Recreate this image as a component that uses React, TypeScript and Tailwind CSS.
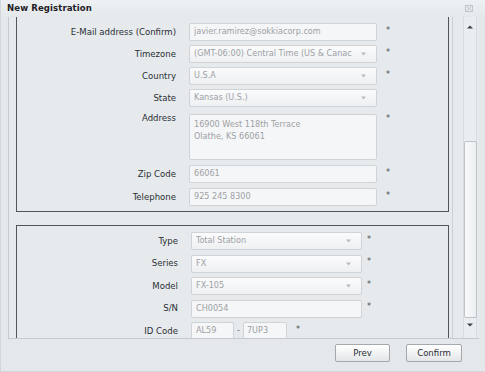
import React from "react";

const font = { fontFamily: '"DejaVu Sans Condensed", "DejaVu Sans", sans-serif' };

function Arrow() {
  return (
    <svg width="7" height="4" viewBox="0 0 7 4" className="shrink-0 ml-[4px]">
      <path d="M1 0.5 L6 0.5 L3.5 3.5 Z" fill="#b8bcc0" />
    </svg>
  );
}

function Field({
  label,
  value,
  combo,
  required,
  width,
  gap,
}: {
  label: string;
  value: string;
  combo?: boolean;
  required?: boolean;
  width: string;
  gap: string;
}) {
  return (
    <div className="flex items-center h-[18px]">
      <div className="w-[159px] text-right text-[9.5px] text-[#2a2e33]">{label}</div>
      <div
        className={`ml-[13px] ${width} h-[18px] flex items-center pl-[4px] pr-[9px] rounded-[2px] border border-[#cfd4d8] ${
          combo ? "bg-gradient-to-b from-[#fbfbfc] to-[#eef0f2]" : "bg-[#f5f6f7]"
        }`}
      >
        <span className="flex-1 min-w-0 text-[9px] text-[#9da1a5] whitespace-nowrap overflow-hidden">{value}</span>
        {combo && <Arrow />}
      </div>
      {required && <span className={`${gap} text-[9px] text-[#4a4f55] -mt-[3px]`}>*</span>}
    </div>
  );
}

export default function App() {
  return (
    <div
      className="w-[485px] h-[372px] bg-[#e4e8eb] flex flex-col overflow-hidden border-l border-b border-[#d2d6da]"
      style={font}
    >
      {/* title bar */}
      <div className="h-[16px] flex items-center justify-between pl-[6px] pr-[12px] bg-gradient-to-b from-[#eef1f3] to-[#e6e9ec]">
        <span className="text-[9.5px] font-bold text-[#1e2226] tracking-[0.1px]">New Registration</span>
        <svg width="8" height="7" viewBox="0 0 8 7">
          <rect x="0.5" y="0.5" width="7" height="6" fill="none" stroke="#c2c6ca" />
          <path d="M1.5 1.5 L6.5 5.5 M6.5 1.5 L1.5 5.5" stroke="#c2c6ca" />
        </svg>
      </div>

      {/* scroll viewer */}
      <div className="ml-[7px] mt-[1px] w-[471px] h-[322px] flex border-l border-b border-[#c6cacf] bg-[#e6eaed]">
        <div className="flex-1 overflow-hidden pl-[7px] pr-[3px]">
          <div className="-mt-[20px] flex flex-col">
            {/* panel 1 */}
            <div className="border-[1.5px] border-[#4f555b] pt-[25px] pb-[5px] flex flex-col gap-[4px]">
              <Field label="E-Mail address (Confirm)" value="javier.ramirez@sokkiacorp.com" required width="w-[188px]" gap="ml-[9px]" />
              <Field label="Timezone" value="(GMT-06:00) Central Time (US & Canac" combo required width="w-[188px]" gap="ml-[9px]" />
              <Field label="Country" value="U.S.A" combo required width="w-[188px]" gap="ml-[9px]" />
              <Field label="State" value="Kansas (U.S.)" combo width="w-[188px]" gap="ml-[9px]" />
              <div className="flex items-start mt-[3px]">
                <div className="w-[159px] text-right text-[9.5px] text-[#2a2e33] -mt-[3px]">Address</div>
                <div className="ml-[13px] w-[188px] h-[46px] rounded-[2px] border border-[#cfd4d8] bg-[#f5f6f7] px-[4px] pt-[3px] text-[9px] leading-[12px] text-[#9da1a5]">
                  <div>16900 West 118th Terrace</div>
                  <div>Olathe, KS 66061</div>
                </div>
                <span className="ml-[9px] text-[9px] text-[#4a4f55] -mt-[2px]">*</span>
              </div>
              <div className="mt-[1px] flex flex-col gap-[5px]">
                <Field label="Zip Code" value="66061" required width="w-[188px]" gap="ml-[9px]" />
                <Field label="Telephone" value="925 245 8300" required width="w-[188px]" gap="ml-[9px]" />
              </div>
            </div>

            {/* panel 2 */}
            <div className="mt-[13px] border-[1.5px] border-[#4f555b] border-b-0 pt-[6px] pl-[2px] flex flex-col gap-[4.5px] h-[200px]">
              <Field label="Type" value="Total Station" combo required width="w-[171px]" gap="ml-[5px]" />
              <Field label="Series" value="FX" combo required width="w-[171px]" gap="ml-[5px]" />
              <Field label="Model" value="FX-105" combo required width="w-[171px]" gap="ml-[5px]" />
              <Field label="S/N" value="CH0054" required width="w-[171px]" gap="ml-[5px]" />
              <div className="flex items-center h-[18px]">
                <div className="w-[159px] text-right text-[9.5px] text-[#2a2e33]">ID Code</div>
                <div className="ml-[13px] w-[43px] h-[18px] flex items-center pl-[4px] rounded-[2px] border border-[#cfd4d8] bg-[#f5f6f7] text-[9px] text-[#9da1a5]">AL59</div>
                <span className="mx-[3px] text-[9px] text-[#6a6f74]">-</span>
                <div className="w-[44px] h-[18px] flex items-center pl-[3px] rounded-[2px] border border-[#cfd4d8] bg-[#f5f6f7] text-[9px] text-[#9da1a5]">7UP3</div>
                <span className="ml-[9px] text-[9px] text-[#4a4f55] -mt-[3px]">*</span>
              </div>
            </div>
          </div>
        </div>

        {/* scrollbar */}
        <div className="w-[27px] border-l border-[#cdd1d5] flex justify-end pr-[2px]">
          <div className="w-[14px] h-full flex flex-col items-center bg-[#eaedf0] border-x border-[#d8dcdf] py-[3px]">
            <svg width="6" height="4" viewBox="0 0 6 4" className="mt-[5px]">
              <path d="M0 3.5 L6 3.5 L3 0.5 Z" fill="#3c4146" />
            </svg>
            <div className="flex-1" />
            <div className="w-[13px] h-[177px] rounded-[2px] border border-[#bfc4c9] bg-gradient-to-r from-[#f8f9fa] to-[#eceff1]" />
            <svg width="6" height="4" viewBox="0 0 6 4" className="mt-[5px] mb-[8px]">
              <path d="M0 0.5 L6 0.5 L3 3.5 Z" fill="#3c4146" />
            </svg>
          </div>
        </div>
      </div>

      {/* footer */}
      <div className="flex justify-end gap-[16px] pr-[23px] pt-[5px]">
        <button className="w-[55px] h-[18px] rounded-[2px] border border-[#a4a9ae] bg-gradient-to-b from-[#ffffff] to-[#e4e6e8] text-[9.5px] text-[#2a2e33]">Prev</button>
        <button className="w-[56px] h-[18px] rounded-[2px] border border-[#a4a9ae] bg-gradient-to-b from-[#ffffff] to-[#e4e6e8] text-[9.5px] text-[#2a2e33]">Confirm</button>
      </div>
    </div>
  );
}
